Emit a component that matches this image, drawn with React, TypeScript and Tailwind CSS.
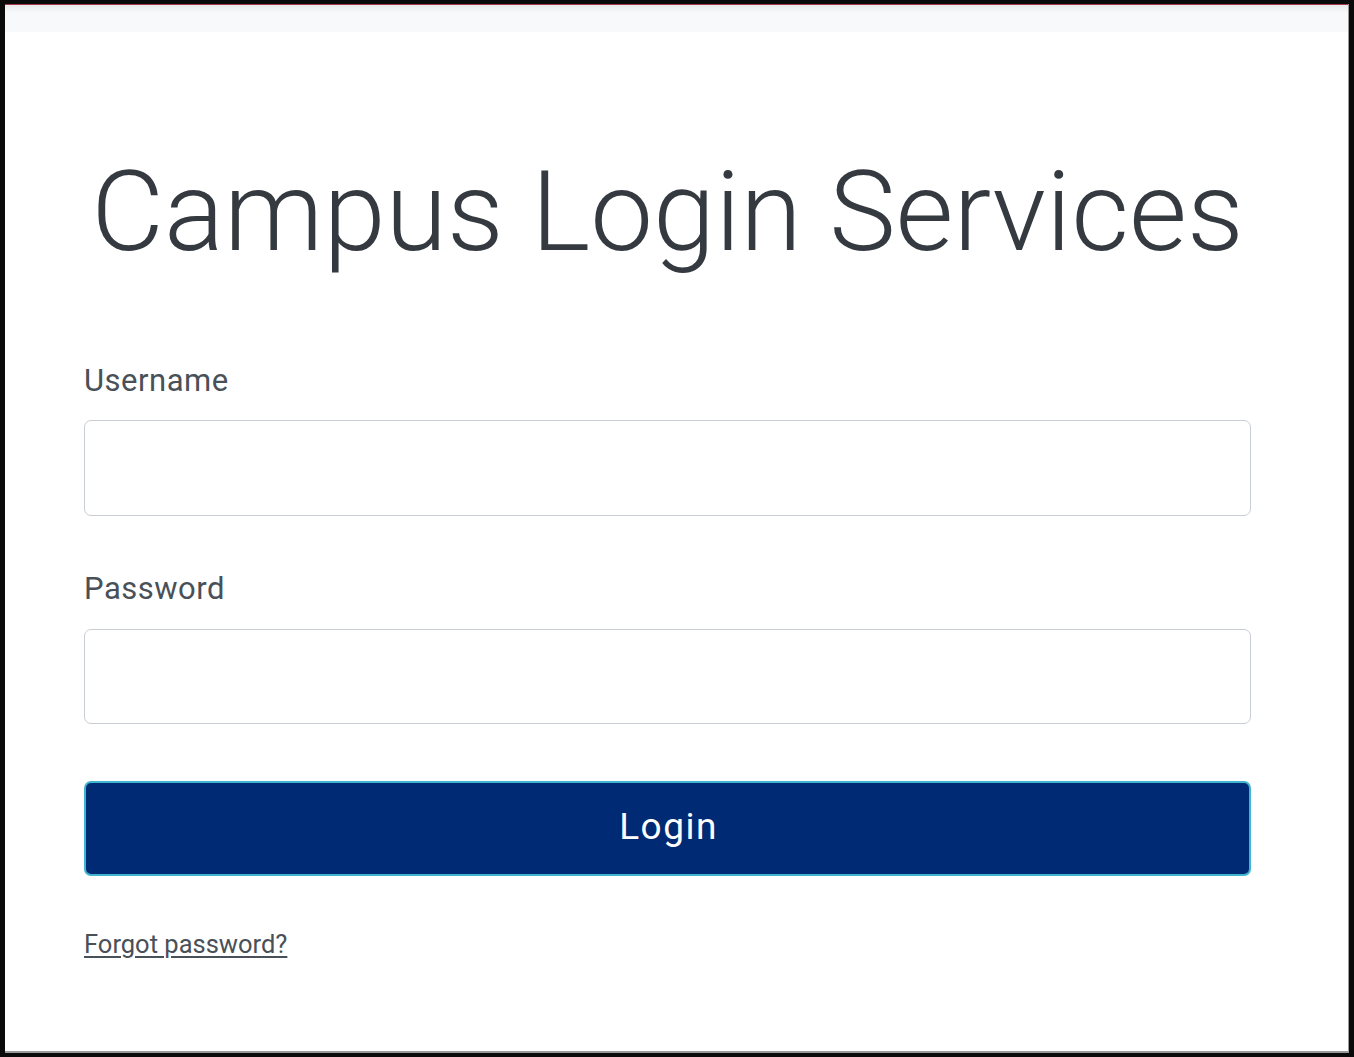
import React from "react";

export default function App() {
  return (
    <div
      className="w-[1354px] h-[1057px] bg-[#0a0a0a] pl-[5px] pr-[5px] pt-[4px] pb-[4px] overflow-hidden"
      style={{ fontFamily: "Roboto, 'Noto Sans', sans-serif" }}
    >
      <div className="h-full w-full bg-white flex flex-col border-b-[2px] border-b-[#9a9a9a] border-r-[1px] border-r-[#9a9a9a] overflow-hidden">
        <div className="h-[1px] shrink-0 bg-[#a33a48]" />
        <div className="h-[27px] shrink-0 bg-gradient-to-b from-[#e9eaed] to-[#f8f9fa] to-[30%]" />
        <div className="flex flex-col pl-[79px] w-[1246px] shrink-0">
          <h1 className="mt-[124px] whitespace-nowrap text-center text-[112px] leading-[1] font-light text-[#343a40]">
            Campus Login Services
          </h1>
          <label className="mt-[97px] text-[31px] leading-[1] tracking-[0.5px] text-[#495057]">Username</label>
          <div className="mt-[24px] h-[96px] rounded-[7px] border-[1.5px] border-[#c9ced4] bg-white" />
          <label className="mt-[57px] text-[31px] leading-[1] tracking-[0.5px] text-[#495057]">Password</label>
          <div className="mt-[25px] h-[95px] rounded-[7px] border-[1.5px] border-[#c9ced4] bg-white" />
          <button className="mt-[57px] h-[95px] rounded-[7px] border-[2px] border-[#3fb5cf] bg-[#002b74] text-white text-[37px] leading-[1] tracking-[1.5px] pb-[4px] pl-[2px]">
            Login
          </button>
          <a className="mt-[56px] self-start text-[25.5px] leading-[1] text-[#495057] underline underline-offset-[3px]">
            Forgot password?
          </a>
        </div>
      </div>
    </div>
  );
}
